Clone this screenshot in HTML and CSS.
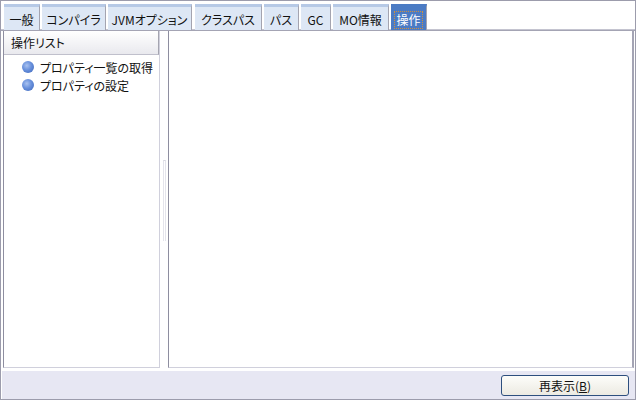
FILE: index.html
```html
<!DOCTYPE html>
<html lang="ja">
  <head>
    <meta charset="UTF-8" />
    <title>操作</title>
    <link rel="stylesheet" href="styles.css">
  </head>
  <body>
    <div class="window">
      <div class="tabs">
        <div class="tab">一般</div>
        <div class="tab">コンパイラ</div>
        <div class="tab">JVMオプション</div>
        <div class="tab">クラスパス</div>
        <div class="tab">パス</div>
        <div class="tab">GC</div>
        <div class="tab">MO情報</div>
        <div class="tab selected"><span class="focus">操作</span></div>
      </div>
      <div class="content">
        <div class="left-panel">
          <div class="panel-header">操作リスト</div>
          <ul class="op-list">
            <li><span class="dot"></span>プロパティ一覧の取得</li>
            <li><span class="dot"></span>プロパティの設定</li>
          </ul>
        </div>
        <div class="splitter"><div class="grip"></div></div>
        <div class="right-panel"></div>
      </div>
      <div class="bottom-bar">
        <button class="refresh-btn">再表示(<u>B</u>)</button>
      </div>
    </div>
  </body>
</html>
```

FILE: styles.css
```css
body {
  margin: 0;
  padding: 0;
  font-family: "Noto Sans CJK JP", "DejaVu Sans", sans-serif;
  font-size: 12px;
  font-feature-settings: "palt";
  color: #111;
}

.window {
  width: 636px;
  height: 400px;
  box-sizing: border-box;
  border: 1px solid #9c9cac;
  background-color: #fff;
  display: flex;
  flex-direction: column;
}

.tabs {
  display: flex;
  gap: 2px;
  padding: 3px 0 0 3px;
  height: 29px;
  box-sizing: border-box;
  border-bottom: 1px solid #c4c4d0;
}

.tab {
  flex: none;
  height: 26px;
  box-sizing: border-box;
  border-top: 3px solid #b6c9e6;
  border-right: 1px solid #a4a4b0;
  background-color: #dde7f5;
  display: flex;
  align-items: center;
  justify-content: center;
  padding-top: 2px;
  white-space: nowrap;
}

.tab:nth-child(1) { width: 36px; }
.tab:nth-child(2) { width: 64px; }
.tab:nth-child(3) { width: 84px; margin-right: 1px; }
.tab:nth-child(4) { width: 67px; }
.tab:nth-child(5) { width: 35px; }
.tab:nth-child(6) { width: 30px; }
.tab:nth-child(7) { width: 56px; }
.tab:nth-child(8) { width: 36px; }

.tab.selected {
  background-color: #4b7bc4;
  border-top-color: #4b7bc4;
  color: #fff;
}

.tab .focus {
  outline: 1px dotted #d09040;
  outline-offset: 0;
  line-height: 16px;
  padding: 0 1px;
}

.content {
  display: flex;
  height: 339px;
  border-top: 1px solid #a4a4b4;
  padding: 0 1px 1px 2px;
  box-sizing: border-box;
}

.left-panel {
  width: 157px;
  box-sizing: border-box;
  display: flex;
  flex-direction: column;
  border-left: 1px solid #8e8ea0;
  border-right: 1px solid #d0d0dc;
  border-bottom: 1px solid #d0d0dc;
}

.panel-header {
  height: 24px;
  box-sizing: border-box;
  padding: 3px 0 0 7px;
  background: linear-gradient(#ffffff, #e9e9ee);
  border-right: 1px solid #a4a4b0;
  border-bottom: 1px solid #c0c0cc;
}

.op-list {
  list-style: none;
  margin: 0;
  padding: 3px 0 0 18px;
}

.op-list li {
  display: flex;
  align-items: center;
  gap: 6px;
  height: 18px;
}

.dot {
  width: 12px;
  height: 12px;
  border-radius: 50%;
  background: radial-gradient(circle at 40% 38%, #a9c2f0 0%, #6890dc 45%, #3b64b8 100%);
}

.splitter {
  width: 8px;
  display: flex;
  justify-content: center;
}

.grip {
  margin-top: 129px;
  width: 1px;
  height: 80px;
  border-left: 1px solid #e4e4ec;
  border-right: 1px solid #e4e4ec;
  border-top: 1px solid #d8d8e0;
}

.right-panel {
  flex: 1;
  border-left: 1px solid #8e8ea0;
  border-right: 2px solid #a4a4b4;
  border-bottom: 1px solid #d0d0dc;
  background-color: #fff;
}

.bottom-bar {
  flex: 1;
  background-color: #e7e7f3;
  margin: 2px 0 0 1px;
  display: flex;
  justify-content: flex-end;
  align-items: flex-start;
  padding: 4px 6px 0 0;
}

.refresh-btn {
  width: 128px;
  height: 21px;
  border: 1px solid #2d4f7e;
  border-radius: 3px;
  background: linear-gradient(#fdfdfa, #eceae2);
  font-family: "Noto Sans CJK JP", "DejaVu Sans", sans-serif;
  font-size: 12px;
  font-feature-settings: "palt";
  color: #111;
  padding: 0;
}
```
